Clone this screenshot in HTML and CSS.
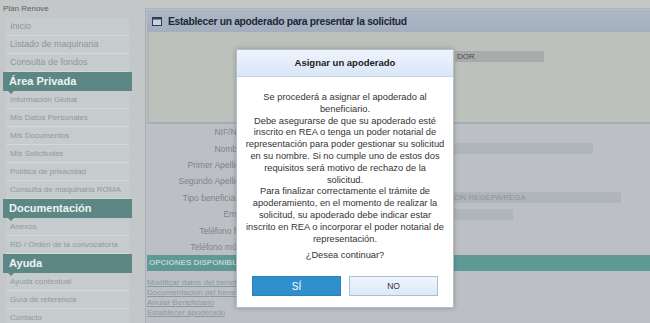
FILE: index.html
```html
<!DOCTYPE html>
<html lang="es">
<head>
    <meta charset="UTF-8">
    <meta name="viewport" content="width=device-width, initial-scale=1.0">
    <title>Plan Renove - Establecer apoderado</title>
    <link rel="stylesheet" href="styles.css">
</head>
<body>
    <div class="page">
        <aside class="sidebar">
            <div class="app-name">Plan Renove</div>
            <ul class="menu">
                <li class="item">Inicio</li>
                <li class="item">Listado de maquinaria</li>
                <li class="item">Consulta de fondos</li>
                <li class="head">Área Privada</li>
                <li class="item sub">Información Global</li>
                <li class="item sub">Mis Datos Personales</li>
                <li class="item sub">Mis Documentos</li>
                <li class="item sub">Mis Solicitudes</li>
                <li class="item sub">Política de privacidad</li>
                <li class="item sub">Consulta de maquinaria ROMA</li>
                <li class="head">Documentación</li>
                <li class="item sub">Anexos</li>
                <li class="item sub">RD / Orden de la convocatoria</li>
                <li class="head">Ayuda</li>
                <li class="item sub">Ayuda contextual</li>
                <li class="item sub">Guía de referencia</li>
                <li class="item sub">Contacto</li>
            </ul>
        </aside>

        <main class="main">
            <section class="panel">
                <div class="panel-head">
                    <svg class="panel-icon" width="10" height="9" viewBox="0 0 10 9">
                        <rect x="0.5" y="0.5" width="9" height="8" fill="#c9d2dc" stroke="#2f3d50"/>
                        <rect x="0.5" y="0.5" width="9" height="2" fill="#2f3d50"/>
                    </svg>
                    Establecer un apoderado para presentar la solicitud
                </div>

                <div class="panel-top">
                    <div class="row">
                        <span class="label">Apoderado:</span>
                        <span class="value dark">DOR</span>
                    </div>
                </div>

                <div class="form">
                    <div class="row"><span class="label">NIF/NIE:</span><span class="value w-short"></span></div>
                    <div class="row"><span class="label">Nombre:</span><span class="value w-name"></span></div>
                    <div class="row"><span class="label">Primer Apellido:</span><span class="value w-short"></span></div>
                    <div class="row"><span class="label">Segundo Apellido:</span><span class="value w-short"></span></div>
                    <div class="row"><span class="label">Tipo beneficiario:</span><span class="value w-type">ON REGEPA/REGA</span></div>
                    <div class="row"><span class="label">Email:</span><span class="value w-mail"></span></div>
                    <div class="row"><span class="label">Teléfono fijo:</span></div>
                    <div class="row"><span class="label">Teléfono móvil:</span></div>
                </div>

                <div class="options-bar">OPCIONES DISPONIBLES</div>
                <div class="links">
                    <a href="#">Modificar datos del beneficiario</a>
                    <a href="#">Documentación del beneficiario</a>
                    <a href="#">Anular Beneficiario</a>
                    <a href="#">Establecer apoderado</a>
                </div>
            </section>
        </main>
    </div>

    <div class="dialog">
        <div class="dialog-title">Asignar un apoderado</div>
        <div class="dialog-body">
            <p>Se procederá a asignar el apoderado al<br>
            beneficiario.<br>
            Debe asegurarse de que su apoderado esté<br>
            inscrito en REA o tenga un poder notarial de<br>
            representación para poder gestionar su solicitud<br>
            en su nombre. Si no cumple uno de estos dos<br>
            requisitos será motivo de rechazo de la<br>
            solicitud.<br>
            Para finalizar correctamente el trámite de<br>
            apoderamiento, en el momento de realizar la<br>
            solicitud, su apoderado debe indicar estar<br>
            inscrito en REA o incorporar el poder notarial de<br>
            representación.</p>
            <p class="question">¿Desea continuar?</p>
        </div>
        <div class="dialog-buttons">
            <button class="btn btn-yes">SÍ</button>
            <button class="btn btn-no">NO</button>
        </div>
    </div>
</body>
</html>
```

FILE: styles.css
```css
body {
    margin: 0;
    width: 650px;
    height: 323px;
    overflow: hidden;
    position: relative;
    background: #c4c7c7;
    font-family: "Liberation Sans", Arial, sans-serif;
}
.page { display: flex; align-items: flex-start; }

/* sidebar */
.sidebar { width: 129px; margin-left: 3px; flex-shrink: 0; }
.app-name { height: 18px; line-height: 18px; font-size: 8px; color: #5c6162; }
.menu { list-style: none; margin: 0; padding: 0; }
.menu .item {
    height: 18px;
    box-sizing: border-box;
    margin: 0 3px;
    padding-left: 4px;
    background: #c6cccd;
    border-bottom: 1px solid #d3d8d9;
    font-size: 9px;
    line-height: 17px;
    color: #8e9699;
    white-space: nowrap;
}
.menu .item.sub { font-size: 8px; color: #8f999c; }
.menu .head {
    position: relative;
    height: 19px;
    padding-left: 6px;
    background: #5c8785;
    color: #eef3f3;
    font-size: 11px;
    font-weight: bold;
    line-height: 19px;
}
.menu .head::after {
    content: "";
    position: absolute;
    left: 5px;
    bottom: -3px;
    border-left: 3px solid transparent;
    border-right: 3px solid transparent;
    border-top: 3px solid #5c8785;
}

/* main panel */
.main { flex: 1; margin-left: 13px; margin-top: 8px; }
.panel {
    border-top: 1px solid #aeb4b8;
    border-left: 1px solid #a7adb1;
    padding: 1px 0 0 1px;
    background: #bcc0c4;
}
.panel-head {
    height: 22px;
    display: flex;
    align-items: center;
    gap: 6px;
    padding-left: 5px;
    background: linear-gradient(#adb8c6, #a3aebe);
    color: #1e2735;
    font-size: 10.3px;
    font-weight: bold;
    letter-spacing: -0.3px;
}
.panel-icon { flex-shrink: 0; }
.panel-top {
    height: 92px;
    box-sizing: border-box;
    padding-top: 19px;
    background: #bdc1bc;
    border-bottom: 2px solid #9eafbc;
    border-left: 2px solid #b3b8b5;
}
.row {
    display: grid;
    grid-template-columns: 100px 1fr;
    column-gap: 6px;
    align-items: center;
    height: 16.4px;
}
.panel-top .row { grid-template-columns: 300px 1fr; height: 11px; }
.label { text-align: right; font-size: 8.5px; color: #7c8388; white-space: nowrap; }
.value {
    height: 11px;
    padding-left: 2px;
    background: #b0b5b9;
    font-size: 8px;
    line-height: 11px;
    color: #8d9499;
    white-space: nowrap;
    overflow: hidden;
}
.value.dark { width: 87px; background: #a9aaaa; color: #4a4d4e; }
.w-short { width: 160px; }
.w-name { width: 338px; }
.w-type { width: 368px; padding-left: 201px; box-sizing: border-box; }
.w-mail { width: 258px; }

.options-bar {
    height: 16px;
    line-height: 16px;
    padding-left: 2px;
    background: #5f9996;
    color: #b9d3d2;
    font-size: 8px;
    font-weight: bold;
}
.links {
    display: flex;
    flex-direction: column;
    padding: 7px 0 6px 0;
}
.links a { font-size: 8px; line-height: 10px; color: #8a9ba3; }

/* modal dialog */
.dialog {
    position: absolute;
    left: 236px;
    top: 49px;
    width: 218px;
    height: 259px;
    box-sizing: border-box;
    background: #fff;
    border: 1px solid #b5bcc6;
    box-shadow: 0 0 5px rgba(0, 0, 0, 0.25);
    display: flex;
    flex-direction: column;
}
.dialog-title {
    height: 26px;
    line-height: 26px;
    text-align: center;
    background: linear-gradient(#eef4fc, #d9e7f8);
    border-bottom: 1px solid #c3d3e6;
    color: #1b1b1b;
    font-size: 9.5px;
    font-weight: bold;
}
.dialog-body {
    padding: 15px 2px 0 2px;
    text-align: center;
    white-space: nowrap;
    font-size: 9.3px;
    line-height: 11.8px;
    color: #333;
}
.dialog-body p { margin: 0; }
.dialog-body .question { margin-top: 5px; }
.dialog-buttons {
    display: flex;
    justify-content: center;
    gap: 8px;
    margin-top: 14px;
}
.btn {
    width: 89px;
    height: 20px;
    border-radius: 0;
    font-family: "Liberation Sans", Arial, sans-serif;
    cursor: pointer;
}
.btn-yes { background: #2f8fcd; border: 1px solid #2a81bb; color: #fff; font-size: 10px; }
.btn-no { background: linear-gradient(#eff5fd, #dce8f8); border: 1px solid #a9bed7; color: #333; font-size: 8.5px; }
```
